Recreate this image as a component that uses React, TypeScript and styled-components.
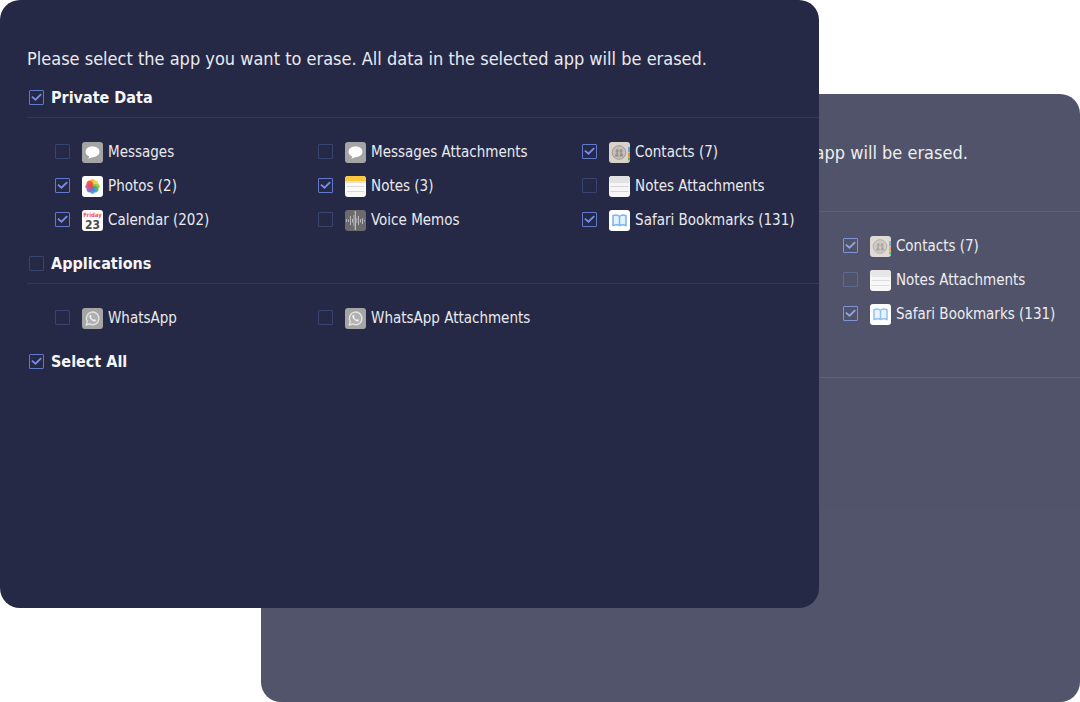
import React, { useId, useState } from "react";
import styled, { createGlobalStyle } from "styled-components";

const GlobalStyle = createGlobalStyle`
  * { box-sizing: border-box; }
  body {
    margin: 0;
    background: #ffffff;
    font-family: "DejaVu Sans Condensed", "DejaVu Sans", Tahoma, sans-serif;
    font-stretch: condensed;
  }
`;

const Stage = styled.main`
  display: grid;
  grid-template-columns: 1fr;
`;

const Title = styled.p`
  margin: 0 0 16px;
  font-size: 18px;
  line-height: 24px;
  white-space: nowrap;
`;

const TitleLead = styled.span``;

const Group = styled.div`
  margin-bottom: 22px;
`;

const GroupHeader = styled.div<{ $ruled?: boolean }>`
  display: flex;
  padding-bottom: 8px;
  border-bottom: ${(p) => (p.$ruled ? "1px solid #323760" : "0")};
`;

const GroupLabel = styled.label`
  display: flex;
  align-items: center;
  gap: 7px;
  height: 22px;
  padding-left: 2px;
  font-size: 16px;
  line-height: 22px;
  font-weight: bold;
  color: #f6f6f8;
`;

const Items = styled.div`
  display: grid;
  grid-template-columns: 263fr 264fr 237fr;
  row-gap: 12px;
  padding: 23px 0 0 28px;
`;

const ItemLabel = styled.label`
  display: flex;
  align-items: center;
  height: 22px;
  font-size: 15px;
  line-height: 22px;
  white-space: nowrap;
`;

const Panel = styled.section`
  grid-area: 1 / 1;
  z-index: 1;
  justify-self: start;
  align-self: start;
  width: 75.85%;
  min-height: 608px;
  padding: 47px 0 40px 27px;
  border-radius: 20px;
  background: #252945;
  color: #eaeaee;
  overflow: hidden;
`;

/* The faded copy: only what sticks out beyond the front panel is shown. */
const BackPanel = styled(Panel)`
  z-index: 0;
  justify-self: end;
  margin-top: 94px;
  opacity: 0.8;

  ${TitleLead}, ${GroupLabel}, ${ItemLabel}:not(:nth-child(3n)) {
    visibility: hidden;
  }
`;

const CheckBox = styled.span`
  display: grid;
  flex: none;
  padding-bottom: 1px;
  & > * {
    grid-area: 1 / 1;
  }
`;

const CheckInput = styled.input`
  appearance: none;
  width: 15px;
  height: 15px;
  margin: 0;
  border: 1px solid #37446f;
  border-radius: 1px;
  background: transparent;
  &:checked {
    border-color: #6079cb;
  }
  &:not(:checked) + svg {
    display: none;
  }
`;

const Tick = styled.svg`
  pointer-events: none;
`;

const AppIcon = styled.svg`
  flex: none;
  margin: 0 5px 0 12px;
`;

function Check({ id, initial }: { id: string; initial: boolean }) {
  const [on, setOn] = useState(initial);
  return (
    <CheckBox>
      <CheckInput id={id} type="checkbox" checked={on} onChange={() => setOn(!on)} />
      <Tick width="15" height="15" viewBox="0 0 15 15" aria-hidden="true">
        <path d="M2.9 6.6 L6.5 9.7 L12.2 4.1" fill="none" stroke="#748ce6" strokeWidth="1.9" />
      </Tick>
    </CheckBox>
  );
}

type IconName = "messages" | "photos" | "calendar" | "notes" | "memos" | "contacts" | "pages" | "safari" | "whatsapp";

const petals = ["#f5a623", "#f2d52c", "#8cc84b", "#3fae76", "#3f8fd8", "#7a67c7", "#c9569a", "#ee4b3a"];

function drawing(name: IconName) {
  switch (name) {
    case "messages":
      return (
        <>
          <rect width="21" height="21" rx="3" fill="#a5a5a5" />
          <ellipse cx="10.5" cy="9.7" rx="7" ry="5.5" fill="#fff" />
          <path d="M7 13 Q7.5 15.5 6.3 16.5 Q9.2 16.6 10.5 14.5Z" fill="#fff" />
        </>
      );
    case "photos":
      return (
        <>
          <rect width="21" height="21" rx="3" fill="#fff" />
          {petals.map((c, i) => (
            <ellipse key={c} cx="10.5" cy="6.9" rx="2.8" ry="3.6" fill={c} opacity="0.9" transform={`rotate(${i * 45} 10.5 10.5)`} />
          ))}
        </>
      );
    case "calendar":
      return (
        <>
          <rect width="21" height="21" rx="3" fill="#fff" />
          <text x="10.5" y="6.5" textAnchor="middle" fontSize="6" fontWeight="bold" fill="#ef5350">Friday</text>
          <text x="10.5" y="18.5" textAnchor="middle" fontSize="12" fontWeight="bold" fill="#4a4a4a">23</text>
        </>
      );
    case "notes":
      return (
        <>
          <rect width="21" height="21" rx="3" fill="#fafaf8" />
          <path d="M0 5.6V3A3 3 0 0 1 3 0H18A3 3 0 0 1 21 3V5.6Z" fill="#fbc93d" />
          <path d="M0 6.4H21" stroke="#e6dfca" />
          <path d="M2 10.5H19M2 15.5H19" stroke="#d9d9d9" />
        </>
      );
    case "memos":
      return (
        <>
          <rect width="21" height="21" rx="3" fill="#6b6b6e" />
          <path d="M1.5 9V12M3.5 9.5V12M5.5 6V15M7.5 9V12.5M13.5 6V15M15.5 9V12.5M17.5 8V14M19.5 10V11.5" stroke="#b9b9bc" />
          <path d="M10.3 1V20" stroke="#c4c4c6" strokeWidth="1.2" />
          <path d="M8.8 5V16M11.8 8V13" stroke="#a6a6a9" />
        </>
      );
    case "contacts":
      return (
        <>
          <rect width="21" height="21" rx="3" fill="#d8d2c9" />
          <path d="M19 5H21V10H19Z" fill="#53a8e4" />
          <path d="M19 10.5H21V15H19Z" fill="#ef8b3c" />
          <path d="M19 15.5H21V18.5H19Z" fill="#4cb963" />
          <circle cx="10" cy="10.5" r="6.8" fill="#c4beb6" stroke="#a09b95" />
          <ellipse cx="8.2" cy="9" rx="1.5" ry="2" fill="#98938e" />
          <ellipse cx="12" cy="9" rx="1.5" ry="2" fill="#98938e" />
          <path d="M5.8 14.5Q6 11.5 8.2 10.8Q9.7 11.4 9.7 14.8ZM10.6 14.8Q10.6 11.4 12.1 10.8Q14.2 11.5 14.4 14.3Z" fill="#98938e" />
        </>
      );
    case "pages":
      return (
        <>
          <rect width="21" height="21" rx="3" fill="#f6f6f6" />
          <path d="M0 5.6V3A3 3 0 0 1 3 0H18A3 3 0 0 1 21 3V5.6Z" fill="#e1e1e1" />
          <path d="M1 6.2H20M1.5 10.5H19.5M1.5 15.5H19.5" stroke="#d5d5d5" />
        </>
      );
    case "safari":
      return (
        <>
          <rect width="21" height="21" rx="3" fill="#fff" />
          <path
            d="M10.5 6.5Q8 4 4 5.8V15.6Q8 14 10.5 15.6Q13 14 17 15.6V5.8Q13 4 10.5 6.5V15.6"
            fill="#e4f1ff"
            stroke="#78b2ef"
            strokeWidth="1.5"
            strokeLinejoin="round"
          />
        </>
      );
    case "whatsapp":
      return (
        <>
          <rect width="21" height="21" rx="3" fill="#a5a5a5" />
          <path d="M4.2 17L5.3 13.6A6.3 6.3 0 1 1 7.7 15.9Z" fill="#b0b0b0" stroke="#e4e4e4" strokeWidth="1.4" strokeLinejoin="round" />
          <path d="M7.8 7.2Q8.8 6.2 9.4 7.8Q9.7 8.8 9 9.3Q9.7 10.8 11.5 11.8Q12.3 10.8 13 11.3Q14.5 12 13.7 12.9Q12.4 14.2 10 12.5Q7.7 10.7 7.3 8.8Q7.2 7.8 7.8 7.2Z" fill="#eee" />
        </>
      );
  }
}

type Item = { label: string; icon: IconName; checked?: boolean };

const privateData: Item[] = [
  { label: "Messages", icon: "messages" },
  { label: "Messages Attachments", icon: "messages" },
  { label: "Contacts (7)", icon: "contacts", checked: true },
  { label: "Photos (2)", icon: "photos", checked: true },
  { label: "Notes (3)", icon: "notes", checked: true },
  { label: "Notes Attachments", icon: "pages" },
  { label: "Calendar (202)", icon: "calendar", checked: true },
  { label: "Voice Memos", icon: "memos" },
  { label: "Safari Bookmarks (131)", icon: "safari", checked: true },
];

const applications: Item[] = [
  { label: "WhatsApp", icon: "whatsapp" },
  { label: "WhatsApp Attachments", icon: "whatsapp" },
];

function CheckGroup({ label, checked = false, items }: { label: string; checked?: boolean; items?: Item[] }) {
  const id = useId();
  return (
    <Group>
      <GroupHeader $ruled={!!items}>
        <GroupLabel htmlFor={id}>
          <Check id={id} initial={checked} />
          {label}
        </GroupLabel>
      </GroupHeader>
      {items && (
        <Items>
          {items.map((item) => (
            <ItemLabel key={item.label} htmlFor={id + item.label}>
              <Check id={id + item.label} initial={!!item.checked} />
              <AppIcon width="21" height="21" viewBox="0 0 21 21" aria-hidden="true">
                {drawing(item.icon)}
              </AppIcon>
              {item.label}
            </ItemLabel>
          ))}
        </Items>
      )}
    </Group>
  );
}

function EraseForm() {
  return (
    <>
      <Title>
        <TitleLead>Please select the app you want to erase. All data in the selected </TitleLead>
        app will be erased.
      </Title>
      <CheckGroup label="Private Data" checked items={privateData} />
      <CheckGroup label="Applications" items={applications} />
      <CheckGroup label="Select All" checked />
    </>
  );
}

export default function App() {
  return (
    <>
      <GlobalStyle />
      <Stage>
        <BackPanel inert>
          <EraseForm />
        </BackPanel>
        <Panel>
          <EraseForm />
        </Panel>
      </Stage>
    </>
  );
}
